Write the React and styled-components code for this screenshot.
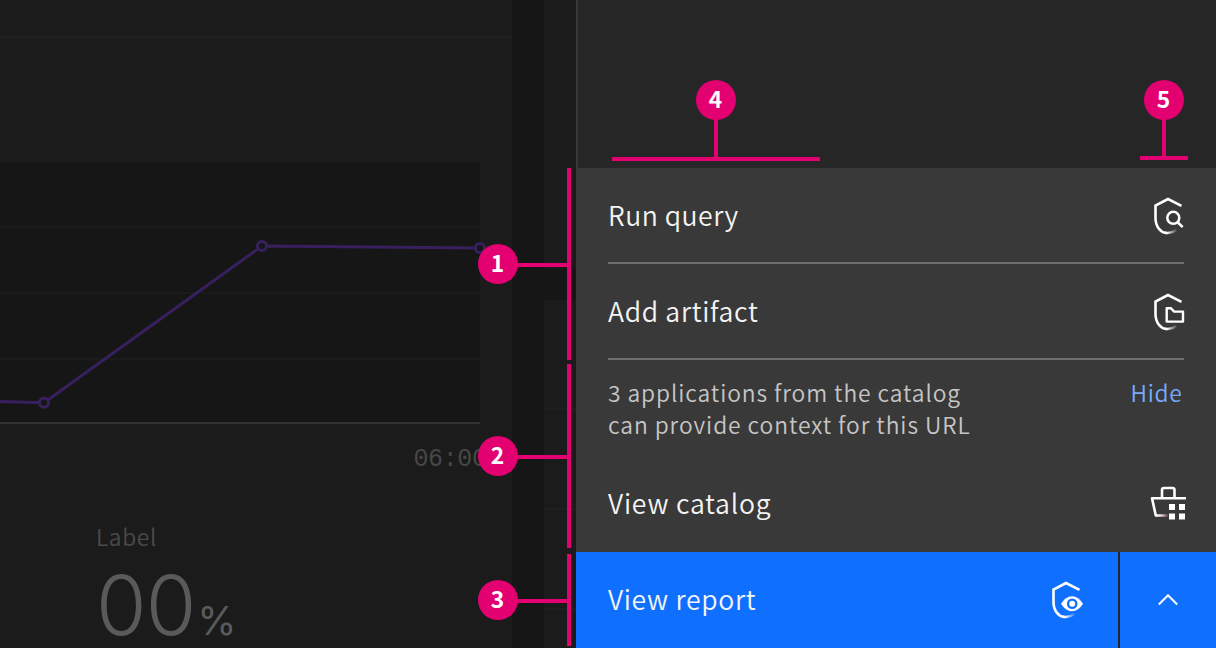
import React from "react";
import styled, { createGlobalStyle } from "styled-components";

const Global = createGlobalStyle`
  *, *::before, *::after { box-sizing: border-box; }
  body { margin: 0; background: #161616; font-family: "Noto Sans CJK JP", "Noto Sans", sans-serif; }
`;

const Stage = styled.main`
  position: relative;
  display: flex;
  width: 1216px;
  height: 648px;
  overflow: hidden;
  background: #161616;
`;

const Dashboard = styled.section`
  display: flex;
  gap: 32px;
  width: 576px;
  height: 648px;
  flex: none;
`;

const MainCard = styled.article`
  display: flex;
  flex-direction: column;
  width: 512px;
  background: #1b1b1b;
`;

const CardHeader = styled.header`
  height: 38px;
  border-bottom: 2px solid #202020;
`;

const ChartWrap = styled.div`
  width: 480px;
  margin-top: 124px;
  height: 262px;
  svg { display: block; overflow: visible; }
`;

const Tick = styled.div`
  width: 96px;
  margin: 19px 0 0 413.5px;
  white-space: nowrap;
  font: 25px/34px "Liberation Mono", monospace;
  letter-spacing: -0.4px;
  color: #474747;
`;

const Metric = styled.div`
  display: flex;
  flex-direction: column;
  padding-left: 96px;
  margin-top: 42px;
`;

const MetricLabel = styled.span`
  font-size: 22.8px;
  font-weight: 350;
  line-height: 36px;
  letter-spacing: 0.6px;
  color: #4a4a4a;
`;

const MetricValue = styled.div`
  display: flex;
  align-items: baseline;
  height: 60px;
  margin-top: 21px;
  line-height: 60px;
  font-family: Inter, sans-serif;
  font-weight: 300;
  color: #5a5a5a;
`;

const Digits = styled.span`
  font-size: 82px;
  letter-spacing: -1px;
`;

const Unit = styled.span`
  margin-left: 2px;
  font-size: 40px;
  font-weight: 400;
  line-height: 40px;
`;

const SideCards = styled.div`
  display: flex;
  flex-direction: column;
  gap: 32px;
  width: 32px;
`;

const SideCard = styled.div`
  height: ${(p) => p.$h}px;
  flex: none;
  background: #1b1b1b;
`;

const SideRow = styled.div`
  height: ${(p) => p.$h}px;
  border-bottom: 2px solid #1f1f1f;
`;

const Panel = styled.aside`
  display: flex;
  flex-direction: column;
  width: 640px;
`;

const PanelTop = styled.div`
  height: 168px;
  flex: none;
  background: #262626;
  border-left: 2px solid #393939;
`;

const Menu = styled.div`
  height: 384px;
  padding: 0 32px;
  background: #393939;
`;

const MenuItem = styled.div`
  display: flex;
  align-items: center;
  justify-content: space-between;
  height: 96px;
  border-bottom: ${(p) => (p.$rule ? "2px solid #6f6f6f" : "0")};
  padding-top: ${(p) => (p.$rule ? "2px" : "0")};
`;

const ItemText = styled.span`
  font-size: 26.6px;
  font-weight: 350;
  line-height: 40px;
  padding-bottom: 2px;
  letter-spacing: ${(p) => p.$track}px;
  color: #f4f4f4;
  white-space: nowrap;
`;

const Context = styled.div`
  display: flex;
  justify-content: space-between;
  height: 96px;
  padding-top: 17px;
`;

const ContextLines = styled.div`
  display: flex;
  flex-direction: column;
`;

const ContextText = styled.span`
  font-size: 22.8px;
  line-height: 32px;
  font-weight: 350;
  white-space: nowrap;
  letter-spacing: ${(p) => p.$track}px;
  color: #c6c6c6;
`;

const HideLink = styled(ContextText)`
  padding-right: 1.5px;
  color: #78a9ff;
`;

const Actions = styled.div`
  display: flex;
  gap: 2px;
  height: 96px;
  background: #262626;
`;

const ReportButton = styled.div`
  display: flex;
  align-items: center;
  justify-content: space-between;
  width: 542px;
  padding: 0 36px 0 32px;
  background: #0f6fff;
`;

const ToggleButton = styled.div`
  display: flex;
  align-items: center;
  justify-content: center;
  width: 96px;
  background: #0f6fff;
`;

const IconSvg = styled.svg`
  display: block;
  flex: none;
  width: 40px;
  height: 40px;
  margin-right: -4px;
  overflow: visible;
  fill: none;
`;

const Badge = styled.div`
  position: absolute;
  left: ${(p) => p.$x - 20}px;
  top: ${(p) => p.$y - 20}px;
  width: 40px;
  height: 40px;
  padding-right: 1px;
  border-radius: 50%;
  background: #e30071;
  color: #fff;
  font-size: 22.8px;
  font-weight: 700;
  line-height: 37px;
  text-align: center;
`;

const Marker = styled.div`
  position: absolute;
  left: ${(p) => p.$x}px;
  top: ${(p) => p.$y}px;
  width: ${(p) => p.$w}px;
  height: ${(p) => p.$h}px;
  background: #e30071;
`;

function ShieldIcon({ id, children }) {
  return (
    <IconSvg viewBox="0 0 40 40">
      <defs>
        <linearGradient id={id} gradientUnits="userSpaceOnUse" x1="19" y1="0" x2="29" y2="0">
          <stop offset="0" stopColor="#fff" />
          <stop offset="1" stopColor="#fff" stopOpacity="0.05" />
        </linearGradient>
      </defs>
      <path d="M33.5 9.8 20 3 7.5 9.5V22C7.5 30.5 12.5 36.3 18 36.9" stroke="#fff" strokeWidth="2.6" />
      <path d="M18 36.9Q23.5 37.6 28.5 34" stroke={`url(#${id})`} strokeWidth="2.6" />
      {children}
    </IconSvg>
  );
}

function CatalogIcon() {
  return (
    <IconSvg viewBox="0 0 40 40">
      <defs>
        <linearGradient id="basket" gradientUnits="userSpaceOnUse" x1="8" y1="0" x2="20" y2="0">
          <stop offset="0" stopColor="#fff" />
          <stop offset=".5" stopColor="#e3c5d8" />
          <stop offset="1" stopColor="#e3c5d8" stopOpacity="0.1" />
        </linearGradient>
      </defs>
      <path
        d="M14 14V6Q14 4 16 4H24.5Q26.5 4 26.5 6V14M38 14.2H4L7.8 31.5H9"
        stroke="#fff"
        strokeWidth="2.6"
        strokeLinejoin="round"
      />
      <path d="M8.5 31.5H20" stroke="url(#basket)" strokeWidth="2.6" />
      <path d="M21 20h6v6h-6zM31 20h6v6h-6zM21 29.500h6v6h-6zM31 29.500h6v6h-6z" fill="#fff" />
    </IconSvg>
  );
}

function Chart() {
  return (
    <svg width="480" height="262" viewBox="0 162 480 262">
      <rect x="0" y="162" width="480" height="260" fill="#161616" />
      <path d="M0 227H480M0 293H480M0 359H480" stroke="#1b1b1b" strokeWidth="2" />
      <path d="M0 423H480" stroke="#323232" strokeWidth="2" />
      <path d="M0 401.500 44 402.700 262 246 480 248" stroke="#38205f" strokeWidth="3" fill="none" />
      <g fill="#161616" stroke="#38205f" strokeWidth="3">
        <circle cx="44" cy="402.700" r="4.600" />
        <circle cx="262" cy="246" r="4.600" />
        <circle cx="480" cy="248" r="4.600" />
      </g>
    </svg>
  );
}

const callouts = [
  { n: 1, x: 498, y: 264, stem: [516, 263, 52, 4], bar: [567, 168, 4, 192] },
  { n: 2, x: 498, y: 456, stem: [516, 455, 52, 4], bar: [567, 364, 4, 184] },
  { n: 3, x: 498, y: 600, stem: [516, 599, 52, 4], bar: [567, 554, 4, 92] },
  { n: 4, x: 716, y: 100, stem: [714, 118, 4, 40], bar: [612, 157, 208, 4] },
  { n: 5, x: 1164, y: 100, stem: [1162, 118, 4, 40], bar: [1140, 156, 48, 4] },
];

function Line({ box }) {
  return <Marker $x={box[0]} $y={box[1]} $w={box[2]} $h={box[3]} />;
}

export default function App() {
  return (
    <>
      <Global />
      <Stage>
        <Dashboard>
          <MainCard>
            <CardHeader />
            <ChartWrap><Chart /></ChartWrap>
            <Tick>06:00</Tick>
            <Metric>
              <MetricLabel>Label</MetricLabel>
              <MetricValue><Digits>00</Digits><Unit>%</Unit></MetricValue>
            </Metric>
          </MainCard>
          <SideCards>
            <SideCard $h={268} />
            <SideCard $h={348}>
              <SideRow $h={110} />
              <SideRow $h={100} />
              <SideRow $h={100} />
            </SideCard>
          </SideCards>
        </Dashboard>
        <Panel>
          <PanelTop />
          <Menu>
            <MenuItem $rule>
              <ItemText $track={0.5}>Run query</ItemText>
              <ShieldIcon id="fadeQuery">
                <circle cx="25.3" cy="21.8" r="6" stroke="#fff" strokeWidth="2.5" />
                <path d="M29.4 26 34.7 31.2" stroke="#fff" strokeWidth="2.5" />
              </ShieldIcon>
            </MenuItem>
            <MenuItem $rule>
              <ItemText $track={0.68}>Add artifact</ItemText>
              <ShieldIcon id="fadeArtifact">
                <path d="M18.7 16.2H22.8L26.2 19.6H35V29.6H18.7Z" stroke="#fff" strokeWidth="2.4" strokeLinejoin="round" />
              </ShieldIcon>
            </MenuItem>
            <Context>
              <ContextLines>
                <ContextText $track={0.92}>3 applications from the catalog</ContextText>
                <ContextText $track={0.94}>can provide context for this URL</ContextText>
              </ContextLines>
              <HideLink $track={0.7}>Hide</HideLink>
            </Context>
            <MenuItem>
              <ItemText $track={0.78}>View catalog</ItemText>
              <CatalogIcon />
            </MenuItem>
          </Menu>
          <Actions>
            <ReportButton>
              <ItemText $track={0.68}>View report</ItemText>
              <ShieldIcon id="fadeReport">
                <path d="M15 23.700Q19.500 16.200 26 16.200T37 23.700Q32.500 31.200 26 31.200T15 23.700Z" fill="#fff" />
                <circle cx="26.200" cy="23.700" r="5.300" fill="#0f6fff" />
                <circle cx="26.200" cy="23.700" r="3" fill="#fff" />
              </ShieldIcon>
            </ReportButton>
            <ToggleButton>
              <svg width="20" height="12" viewBox="0 0 20 12" fill="none">
                <path d="M.8 10.500 10 1.300 19.200 10.500" stroke="#fff" strokeWidth="2" />
              </svg>
            </ToggleButton>
          </Actions>
        </Panel>
        {callouts.map((c) => (
          <React.Fragment key={c.n}>
            <Line box={c.stem} />
            <Line box={c.bar} />
            <Badge $x={c.x} $y={c.y}>{c.n}</Badge>
          </React.Fragment>
        ))}
      </Stage>
    </>
  );
}
